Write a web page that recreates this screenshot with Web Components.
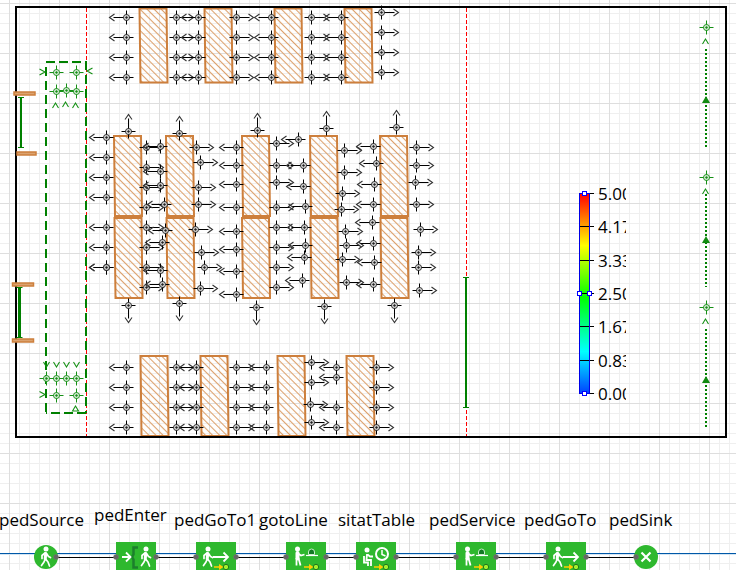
<!DOCTYPE html>
<html lang="en">
<head>
<meta charset="utf-8">
<title>Pedestrian model</title>
<style>
html, body { margin: 0; height: 100%; }
body { font: 17px/24px "Open Sans", "Noto Sans", sans-serif; color: #000; }
</style>
</head>
<body>
<model-canvas>
  <floor-plan></floor-plan>
  <color-legend max="5"></color-legend>
  <process-flow>
    <flow-link style="left:56px;width:60px"></flow-link>
    <flow-link style="left:156px;width:40px"></flow-link>
    <flow-link style="left:236px;width:50px"></flow-link>
    <flow-link style="left:326px;width:30px"></flow-link>
    <flow-link style="left:396px;width:60px"></flow-link>
    <flow-link style="left:496px;width:50px"></flow-link>
    <flow-link style="left:586px;width:50px"></flow-link>
    <flow-block kind="source" style="left:26px"></flow-block>
    <flow-block kind="enter" style="left:116px"></flow-block>
    <flow-block kind="goto" style="left:196px"></flow-block>
    <flow-block kind="service" style="left:286px"></flow-block>
    <flow-block kind="wait" style="left:356px"></flow-block>
    <flow-block kind="service" style="left:456px"></flow-block>
    <flow-block kind="goto" style="left:546px"></flow-block>
    <flow-block kind="sink" style="left:626px"></flow-block>
    <flow-name style="left:-1px;top:508px">pedSource</flow-name>
    <flow-name style="left:94px;top:503px">pedEnter</flow-name>
    <flow-name style="left:174px;top:508px">pedGoTo1</flow-name>
    <flow-name style="left:259px;top:508px">gotoLine</flow-name>
    <flow-name style="left:338px;top:508px">sitatTable</flow-name>
    <flow-name style="left:429px;top:508px">pedService</flow-name>
    <flow-name style="left:524px;top:508px">pedGoTo</flow-name>
    <flow-name style="left:609px;top:508px">pedSink</flow-name>
  </process-flow>
</model-canvas>

<script>
const define = (name, html, render) => customElements.define(name, class extends HTMLElement {
  constructor() {
    super();
    this.attachShadow({ mode: 'open' }).innerHTML = html;
  }
  connectedCallback() { if (render) render(this, this.shadowRoot); }
});

/* Gridded drawing surface */
define('model-canvas', `<style>
:host { display: block; position: relative; height: 100%; overflow: hidden; background-color: #fff;
  background-image:
    linear-gradient(90deg, #dedede 1px, transparent 1px), linear-gradient(#dedede 1px, transparent 1px),
    linear-gradient(90deg, #efefef 1px, transparent 1px), linear-gradient(#efefef 1px, transparent 1px);
  background-size: 50px 50px, 50px 50px, 10px 10px, 10px 10px;
  background-position: 9px 3px; }
</style><slot></slot>`);

/* Floor plan: walls, desks, seats, gates */
define('floor-plan', `<style>
:host { display: block; position: absolute; inset: 0; }
svg { display: block; width: 100%; height: 100%; overflow: visible; }
.seat { fill: none; stroke: #000; stroke-width: 1; }
.seat .line { stroke-width: 1; }
.seat .head { stroke: #333; stroke-width: 1.1; }
.seat .dot { fill: #222; stroke: none; }
.seat .ring { fill: #f4f4f4; fill-opacity: .8; stroke: #222; }
.green .seat, .green .seat .head { stroke: #159015; }
.green .seat .ring { stroke: #159015; }
.green .seat .dot { fill: #159015; }
.desk { fill: url(#hatch); stroke: #cd7f3c; stroke-width: 2; }
.bar { fill: #dba26f; stroke: #cd7f3c; stroke-width: 1.5; }
.gate { fill: none; stroke: #008000; }
</style><svg aria-hidden="true"></svg>`, (host, root) => {
  const turn = { R: 0, D: 90, L: 180, U: 270 };
  const seat = (d, x, y) => `<g class="seat" transform="translate(${x + .5} ${y + .5}) rotate(${turn[d] || 0})">
    <path class="line" d="M-7 0H${d === 'N' ? 7 : 13}M0-7V7"/>
    ${d === 'N' ? '' : '<path class="head" d="M12-3.500L17 0L12 3.500"/>'}
    <circle class="ring" r="3"/><circle class="dot" r="1.2"/></g>`;
  const column = (d, x, ys) => ys.map(y => seat(d, x, y)).join('');
  const T = [17, 37, 57, 77], B = [367, 387, 407, 427];
  const columns = [
    ['L', 126, T], ['R', 176, T], ['L', 198, T], ['R', 236, T], ['L', 271, T], ['R', 311, T], ['L', 341, T],
    ['R', 381, [12, 32, 52, 72]],
    ['L', 106, [137, 157, 177, 197, 227, 247, 267, 267]],
    ['R', 146, [147, 167, 187, 207, 227, 247, 267, 287]],
    ['L', 160, [146, 171, 185, 270]], ['L', 164, [204]], ['L', 165, [230]], ['L', 162, [242, 284]],
    ['R', 196, [147]], ['R', 200, [162, 288]], ['R', 198, [187, 204]], ['R', 195, [229]], ['R', 201, [252]], ['R', 204, [267]],
    ['L', 236, [147, 165, 184, 207, 231, 249, 271, 294]],
    ['R', 276, [143, 165, 182, 207, 227, 247, 267, 287]],
    ['L', 298, [139]], ['L', 303, [165, 186]], ['L', 305, [206, 245]], ['L', 304, [227, 257]], ['L', 302, [280]],
    ['R', 344, [150, 172]], ['R', 342, [193, 259]], ['R', 341, [209]], ['R', 345, [231]], ['R', 346, [245, 282]],
    ['L', 373, [146, 204, 243, 284]], ['L', 376, [163]], ['L', 374, [184, 262]], ['L', 372, [222]],
    ['R', 416, [147, 165, 204]], ['R', 415, [182]], ['R', 420, [229]], ['R', 418, [252, 267]], ['R', 419, [290]],
    ['U', 128, [131]], ['U', 179, [133]], ['U', 257, [130]], ['U', 326, [128]], ['U', 396, [127]],
    ['D', 128, [305]], ['D', 179, [303]], ['D', 256, [307]], ['D', 324, [306]], ['D', 394, [305]],
    ['L', 126, B], ['R', 176, B], ['L', 196, B], ['R', 236, B], ['L', 266, B],
    ['R', 311, [362, 382, 422]], ['R', 310, [404]], ['L', 336, [367, 377, 407, 427]], ['R', 376, B]
  ];
  const desk = ([x, y, h]) => `<path class="desk" d="M${x} ${y}h27l1 ${h}h-27z"/>`;
  const desks = [
    [139.5, 8.5, 74], [204.5, 8.5, 74], [274.5, 8.5, 74], [344.5, 8.5, 74],
    [114, 136, 80], [166, 136, 80], [242, 136, 80], [310, 136, 80], [380, 136, 80],
    [114.5, 218, 80], [166.5, 218, 80], [242, 218, 80], [310.5, 218, 80], [380.5, 218, 80],
    [140.5, 356, 80], [200.5, 356, 80], [277.5, 356, 80], [346.5, 356, 80]
  ];
  const bar = ([x, y, w]) => `<rect class="bar" x="${x}" y="${y}" width="${w}" height="3"/>`;
  const gate = ([x, y1, y2, w]) => `<path class="gate" stroke-width="${w}" d="M${x} ${y1}V${y2}"/>
    <path class="gate" d="M${x - 3} ${y1 + .5}h6M${x - 3} ${y2 - .5}h6"/>`;
  const up = (x, y) => `M${x - 3} ${y + 5}L${x} ${y}L${x + 3} ${y + 5}`;
  const down = (x, y) => `M${x - 3} ${y}L${x} ${y + 5}L${x + 3} ${y}`;
  const route = ([y1, y2, t]) => `<path d="M706 ${y1}V${y2}" stroke="#008000" stroke-width="2" stroke-dasharray="2 2"/>
    <path d="M706 ${t}l4 7h-8z" fill="#128a12"/>`;

  root.querySelector('svg').innerHTML = `
    <defs><pattern id="hatch" width="5" height="5" patternUnits="userSpaceOnUse" patternTransform="rotate(45)">
      <path d="M0 2.5H5" stroke="#dca16c" stroke-width="1.1"/></pattern></defs>
    <path d="M86.500 8V436M466.500 8V436" stroke="#f00" stroke-dasharray="4 2"/>
    ${desks.map(desk).join('')}
    <rect x="16" y="7" width="710" height="430" fill="none" stroke="#000" stroke-width="2"/>
    ${[[14, 92, 21], [17, 152, 19], [12.5, 283, 21], [12.5, 339, 21]].map(bar).join('')}
    ${[[21, 97, 148, 2], [19.5, 287, 338, 3], [466, 277, 408, 2]].map(gate).join('')}
    <path d="M46 62H86M86 413H46" fill="none" stroke="#008000" stroke-width="2" stroke-dasharray="9 4"/>
    <path d="M46 67V413M86 61V413" fill="none" stroke="#008000" stroke-width="2" stroke-dasharray="9 5"/>
    ${columns.map(c => column(...c)).join('')}
    <g class="green">
      ${column('N', 56, [72, 91, 378, 395])}${column('N', 76, [72, 91, 378, 395])}
      ${column('N', 66, [90, 378])}${column('N', 46, [378])}
      ${column('N', 706, [27, 177, 307])}
      <path fill="none" stroke="#159015" stroke-width="1.1" d="${up(55.5, 103)}${up(65.5, 102)}${up(75.5, 103)}
        ${down(46.5, 362)}${down(56.5, 362)}${down(66.5, 362)}${down(76.5, 362)}${up(75.5, 406)}z
        ${up(705.5, 39)}${up(705.5, 189)}${up(705.5, 319)}
        M39.5 69l5.500 3l-5.500 3M92.500 68l-5.500 3l5.500 3M39.5 391.500l5.500 3l-5.500 3"/>
      ${[[49, 147, 96], [194, 287, 236], [329, 427, 376]].map(route).join('')}
    </g>`;
});

/* Density scale with handles */
define('color-legend', `<style>
:host { display: flex; gap: 4px; position: absolute; left: 576px; top: 181px; width: 50px; overflow: hidden; }
svg { display: block; flex: none; width: 18px; height: 224px; }
.values { display: flex; flex-direction: column; justify-content: space-between; height: 226px; line-height: 26px; }
</style>
<svg viewBox="0 0 18 224" aria-hidden="true">
<defs><linearGradient id="g" x1="0" y1="0" x2="0" y2="1"><stop offset="0" stop-color="#f00"/><stop offset=".26" stop-color="#ff0"/><stop offset=".52" stop-color="#0f0"/><stop offset=".79" stop-color="#0ff"/><stop offset="1" stop-color="#0040ff"/></linearGradient></defs>
<rect x="3.500" y="12.500" width="10" height="200" fill="url(#g)"/>
<path d="M3 12.500H18M3 45.500H18M3 79.500H18M3 112.500H18M3 145.500H18M3 179.500H18M3 212.500H18" stroke="#000"/>
<rect x="3.500" y="12.500" width="10" height="200" fill="none" stroke="#0000e8"/>
<g fill="#fff" stroke="#00f"><rect x="6.500" y="10.500" width="4" height="4"/><rect x="1.500" y="110.500" width="4" height="4"/><rect x="11.500" y="110.500" width="4" height="4"/><rect x="6.500" y="210.500" width="4" height="4"/></g>
</svg><div class="values"></div>`, (host, root) => {
  const max = Number(host.getAttribute('max'));
  root.querySelector('.values').innerHTML =
    [6, 5, 4, 3, 2, 1, 0].map(n => `<span>${(max * n / 6).toFixed(2)}</span>`).join('');
});

/* Process chart */
define('process-flow', `<style>
:host { display: block; position: absolute; inset: 0; }
.rail { position: absolute; left: 0; right: 0; top: 553px; height: 1px; background: #0058a8; border-bottom: 1px solid #d3e5f3; }
</style><div class="rail"></div><slot></slot>`);

define('flow-link', `<style>
:host { display: block; position: absolute; top: 557px; height: 1px; background: #000; }
</style>`);

define('flow-name', `<style>
:host { display: block; position: absolute; white-space: nowrap; }
</style><slot></slot>`);

const port = x => `<circle cx="${x}" cy="15" r="2.500" fill="#666" stroke="#777" stroke-width=".5"/>`;
const walker = x => `<g transform="translate(${x} 0)" fill="none" stroke="#fff" stroke-linecap="round" stroke-linejoin="round">
  <circle cy="7" r="2.500" fill="#fff" stroke="none"/><path d="M-.3 11.500L-.8 17" stroke-width="3"/>
  <path d="M-1 11L-4 13.500V16.500M.5 11.500L2.500 14.500L4.500 15.500M-1 17.500L-2 20L-4.500 23.500M0 17.500L2 20L3.500 24" stroke-width="1.700"/></g>`;
const badge = `<path d="M18 25H24" stroke="#fc0" stroke-width="1.500"/><path d="M23 22l4.500 3l-4.500 3z" fill="#fc0"/><circle cx="30" cy="25" r="2.700" fill="#a4f02c" stroke="#1c7a1c"/>`;
const tile = `<rect width="40" height="40" fill="#2eb82e"/>`;
const icons = {
  source: `<circle cx="20" cy="15" r="12" fill="#2eb82e"/>${walker(20)}${port(30)}`,
  sink: `<circle cx="20" cy="15" r="12" fill="#2eb82e"/><path d="M15.500 10.500l9 9m0-9l-9 9" stroke="#fff" stroke-width="2.200"/>${port(10)}`,
  enter: `${tile}<path d="M22 5.500H17.500V12.500L16 15L17.500 17.500V25.500H22" fill="none" stroke="#1c7f2c" stroke-width="2.500"/>
    <path d="M6 15H14M10 10.500L14.500 15L10 19.500" fill="none" stroke="#fff" stroke-width="1.800"/>${walker(30)}${port(0)}${port(40)}`,
  goto: `${tile}${walker(12)}<path d="M17 15H32M27.500 10.500L32 15L27.500 19.500" fill="none" stroke="#fff" stroke-width="1.800"/>${badge}${port(0)}${port(40)}`,
  service: `${tile}<circle cx="11.500" cy="7" r="2.500" fill="#fff"/>
    <path d="M11.500 11V16.500" stroke="#fff" stroke-width="4" stroke-linecap="round"/>
    <path d="M12 11.500L15 13.500L18.500 12.500M10.500 16V23.500M12.500 16L14.500 23.500" fill="none" stroke="#fff" stroke-width="1.800"/>
    <path d="M22.500 12.500V10a3 3 0 0 1 6 0V12.500z" fill="#137a24" stroke="#c7ecc7" stroke-width="1"/><path d="M20 13.500H32" stroke="#fff" stroke-width="1.200"/>${badge}${port(0)}${port(40)}`,
  wait: `${tile}<circle cx="11" cy="8" r="2.500" fill="#fff"/>
    <path d="M11 12L10.500 18H15V24M11.500 12.500L14 14.500H17M8 14V20.500H12V24" fill="none" stroke="#fff" stroke-width="1.800"/>
    <circle cx="26" cy="12" r="6" fill="none" stroke="#fff" stroke-width="2"/><path d="M26 8V12.500L29.500 14" fill="none" stroke="#fff" stroke-width="1.500"/>${badge}${port(0)}${port(40)}`
};
define('flow-block', `<style>
:host { display: block; position: absolute; top: 542px; width: 40px; height: 40px; }
svg { display: block; width: 100%; height: 100%; overflow: visible; }
</style><svg viewBox="0 0 40 40" aria-hidden="true"></svg>`, (host, root) => {
  root.querySelector('svg').innerHTML = icons[host.getAttribute('kind')];
});
</script>
</body>
</html>
